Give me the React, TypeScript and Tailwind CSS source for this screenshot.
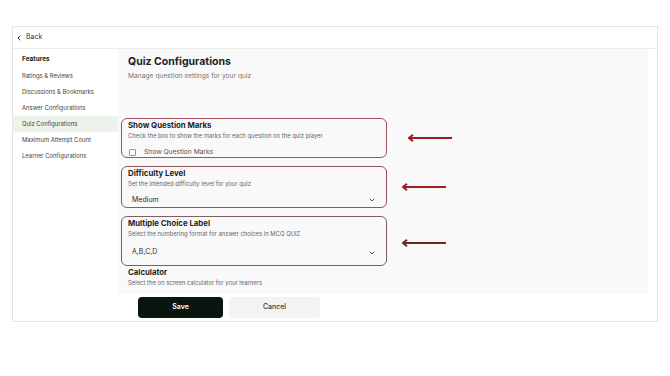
import { ChevronLeft, ChevronDown } from 'lucide-react';

const navItems = [
  'Ratings & Reviews',
  'Discussions & Bookmarks',
  'Answer Configurations',
  'Quiz Configurations',
  'Maximum Attempt Count',
  'Learner Configurations',
];

function Arrow({ color, width }: { color: string; width: number }) {
  return (
    <svg width={width} height="8" viewBox={`0 0 ${width} 8`} className="shrink-0">
      <line x1="2" y1="4" x2={width} y2="4" stroke={color} strokeWidth="2" />
      <path d="M5 0.8 L1 4 L5 7.2" fill="none" stroke={color} strokeWidth="2" />
    </svg>
  );
}

function SelectRow({ value, h }: { value: string; h: string }) {
  return (
    <div className={`flex items-center justify-between px-[6px] ${h}`}>
      <span className="text-[7px] text-[#2b2b2b]">{value}</span>
      <ChevronDown className="w-[8px] h-[8px] text-[#333]" strokeWidth={2.5} />
    </div>
  );
}

export default function App() {
  return (
    <div className="w-[670px] h-[376px] bg-white pt-[26px] pl-[12px]" style={{ fontFamily: 'Inter, "Noto Sans", sans-serif' }}>
      <div className="w-[646px] h-[296px] border border-[#e4e4e4] flex flex-col">
        {/* top bar */}
        <div className="h-[22px] flex items-center gap-[3px] pl-[2px] border-b border-[#ececec] shrink-0">
          <ChevronLeft className="w-[8px] h-[8px] text-[#333]" strokeWidth={3} />
          <span className="text-[7px] text-[#333]">Back</span>
        </div>
        <div className="flex flex-1 min-h-0">
          {/* sidebar */}
          <div className="w-[105px] shrink-0 pt-[6px] flex flex-col">
            <div className="h-[10px] flex items-center pl-[9px] text-[6.5px] font-bold text-[#222]">Features</div>
            <div className="flex flex-col mt-[3px]">
              {navItems.map(item => (
                <div
                  key={item}
                  className={`h-[16px] flex items-center pl-[9px] text-[5.9px] text-[#444] ${item === 'Quiz Configurations' ? 'bg-[#eaf4ea]' : ''}`}
                >
                  {item}
                </div>
              ))}
            </div>
          </div>
          {/* main */}
          <div className="flex-1 flex flex-col pr-[9px]">
            <div className="flex-1 bg-[#f9f9fa] flex">
              <div className="w-[269px] pl-[3px] pt-[6px] flex flex-col">
                <div className="pl-[7px]">
                  <div className="text-[10.5px] font-bold text-[#1f1f1f] leading-[14px]">Quiz Configurations</div>
                  <div className="text-[6.7px] text-[#777] leading-[10px] mt-[2px]">Manage question settings for your quiz</div>
                </div>

                <div className="mt-[37px] h-[40px] border border-[#a2505a] rounded-[6px] px-[6px] pt-[1px]">
                  <div className="text-[7.8px] font-bold text-[#1f1f1f] leading-[11px]">Show Question Marks</div>
                  <div className="text-[5.9px] text-[#666] leading-[9px]">Check the box to show the marks for each question on the quiz player</div>
                  <div className="flex items-center gap-[8px] mt-[7px] pl-[1px]">
                    <div className="w-[7px] h-[7px] border border-[#6aae78] bg-white rounded-[1px]" />
                    <span className="text-[6.7px] text-[#555]">Show Question Marks</span>
                  </div>
                </div>

                <div className="mt-[8px] h-[42px] border border-[#94545a] rounded-[6px] pt-[1px]">
                  <div className="px-[6px]">
                    <div className="text-[7.8px] font-bold text-[#1f1f1f] leading-[11px]">Difficulty Level</div>
                    <div className="text-[5.9px] text-[#666] leading-[9px]">Set the intended difficulty level for your quiz</div>
                  </div>
                  <div className="px-[4px] mt-[5px]">
                    <SelectRow value="Medium" h="h-[14px]" />
                  </div>
                </div>

                <div className="mt-[8px] h-[50px] border border-[#7d625c] rounded-[6px] pt-[1px]">
                  <div className="px-[6px]">
                    <div className="text-[7.8px] font-bold text-[#1f1f1f] leading-[11px]">Multiple Choice Label</div>
                    <div className="text-[5.9px] text-[#666] leading-[9px]">Select the numbering format for answer choices in MCQ QUIZ</div>
                  </div>
                  <div className="px-[4px] mt-[6px]">
                    <SelectRow value="A,B,C,D" h="h-[17px]" />
                  </div>
                </div>

                <div className="pl-[7px] mt-[1px]">
                  <div className="text-[7.8px] font-bold text-[#1f1f1f] leading-[11px]">Calculator</div>
                  <div className="text-[5.9px] text-[#666] leading-[10px]">Select the on screen calculator for your learners</div>
                </div>
              </div>
              {/* arrows */}
              <div className="flex flex-col pt-[85px] pl-[15px]">
                <div className="pl-[6px]"><Arrow color="#9d1c22" width={44} /></div>
                <div className="mt-[41px]"><Arrow color="#a01d22" width={44} /></div>
                <div className="mt-[48px]"><Arrow color="#6e2a1c" width={44} /></div>
              </div>
            </div>
            {/* footer */}
            <div className="h-[27px] bg-white flex items-center gap-[6px] pl-[20px] shrink-0">
              <button className="w-[85px] h-[21px] rounded-[4px] bg-[#0b1510] text-white text-[7px] font-semibold">Save</button>
              <button className="w-[91px] h-[21px] rounded-[4px] bg-[#f3f3f3] text-[#333] text-[7px] font-medium">Cancel</button>
            </div>
          </div>
        </div>
      </div>
    </div>
  );
}
